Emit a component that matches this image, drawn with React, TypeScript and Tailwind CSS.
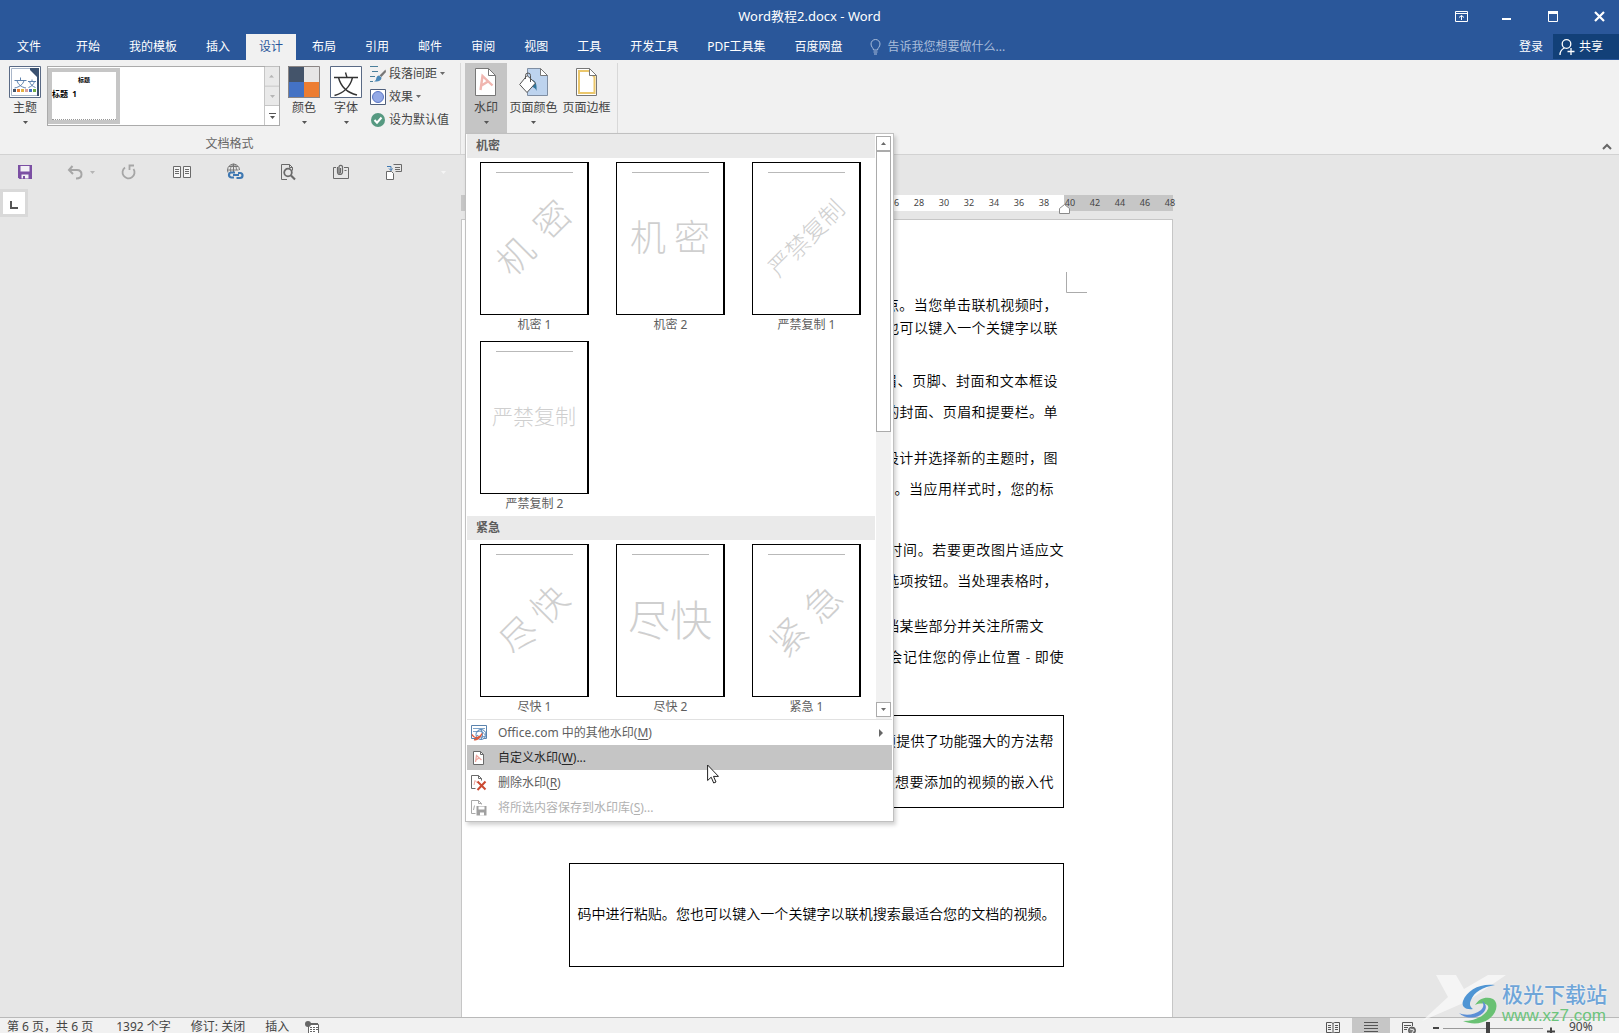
import { useState } from "react"
import type { ReactNode } from "react"

const TABS = ["开始", "我的模板", "插入", "设计", "布局", "引用", "邮件", "审阅", "视图", "工具", "开发工具", "PDF工具集", "百度网盘"]

interface Watermark {
  name: string
  text: string
  className: string
}

interface WatermarkSection {
  title: string
  items: Watermark[]
}

const SECTIONS: WatermarkSection[] = [
  {
    title: "机密",
    items: [
      { name: "机密 1", text: "机密", className: "w-[88px] -rotate-45 text-[36px]" },
      { name: "机密 2", text: "机密", className: "w-20 text-[36px]" },
      { name: "严禁复制 1", text: "严禁复制", className: "w-[96px] -rotate-45 text-[24px]" },
      { name: "严禁复制 2", text: "严禁复制", className: "w-[84px] text-[21px]" },
    ],
  },
  {
    title: "紧急",
    items: [
      { name: "尽快 1", text: "尽快", className: "w-20 -rotate-45 text-[36px]" },
      { name: "尽快 2", text: "尽快", className: "w-[84px] text-[42px]" },
      { name: "紧急 1", text: "紧急", className: "w-[84px] -rotate-45 text-[36px]" },
    ],
  },
]

interface Paragraph {
  leading: string
  lines: { text: string; className: string }[]
}

const PARAGRAPHS: Paragraph[] = [
  {
    leading: "mt-[73px] leading-[23px]",
    lines: [
      { text: "视频提供了功能强大的方法帮助您证明您的观点。当您单击联机视频时，", className: "pl-7 pr-[6px]" },
      { text: "可以在想要添加的视频的嵌入代码中进行粘贴。您也可以键入一个关键字以联", className: "pr-[6px]" },
    ],
  },
  {
    leading: "mt-[26px] leading-[31px]",
    lines: [
      { text: "为使您的文档具有专业外观，Word 提供了页眉、页脚、封面和文本框设", className: "pl-7 pr-[6px]" },
      { text: "计，这些设计可互为补充。例如，您可以添加匹配的封面、页眉和提要栏。单", className: "pr-[6px]" },
    ],
  },
  {
    leading: "mt-[15px] leading-[31px]",
    lines: [
      { text: "主题和样式也有助于文档保持协调。当您单击设计并选择新的主题时，图", className: "pl-7 pr-[6px]" },
      { text: "片、图表或 SmartArt 图形将会更改以匹配新的主题。当应用样式时，您的标", className: "pr-[10px]" },
    ],
  },
  {
    leading: "mt-[30px] leading-[31px]",
    lines: [
      { text: "使用在需要位置出现的新按钮在 Word 中保存时间。若要更改图片适应文", className: "pl-7" },
      { text: "档的方式，请单击该图片，图片旁边将会显示布局选项按钮。当处理表格时，", className: "pr-[6px]" },
    ],
  },
  {
    leading: "mt-[14px] leading-[31px]",
    lines: [
      { text: "在新的阅读视图中阅读更加容易。可以折叠文档某些部分并关注所需文", className: "pl-7 pr-5" },
      { text: "本。如果在达到结尾处之前需要停止阅读，Word 会记住您的停止位置 - 即使", className: "" },
    ],
  },
]

function Caret({ className = "text-[#6a6a6a]" }: { className?: string }) {
  return (
    <svg viewBox="0 0 5 3" className={`h-[3px] w-[5px] shrink-0 ${className}`}>
      <path d="M0 0h5L2.5 3z" fill="currentColor" />
    </svg>
  )
}

/* ---------- ribbon icons ---------- */

function ThemeIcon() {
  return (
    <svg viewBox="0 0 32 32" className="size-8">
      <path d="M.5.5h31v31H.5z" fill="#fff" stroke="#5a6a85" />
      <path d="M2.500 2.500h19l8 8v19h-27z" fill="#fff" stroke="#a9b6c9" />
      <path d="M21 2h9v9h-2l-7-7z" fill="#3b5170" />
      <path d="M29 10v20" stroke="#3b5170" strokeWidth="2" />
      <g fill="none" stroke="#5d81ad">
        <path d="M5.500 14.500h12M11.500 11.500v3M8 14.500c1 4 4 6.500 9 7.500M15 14.500c-1 4-4.500 6.500-9.500 7.500" />
        <path d="M19 15.500h8M23 13.500v2M20.500 15.500c1 3 3 5 6 6M25.500 15.500c-1 3-3 5-6 6" />
      </g>
      <path d="M4 23h3v3H4z" fill="#44546a" />
      <path d="M8 23h3v3H8z" fill="#ed7d31" />
      <path d="M12 23h3v3h-3z" fill="#e3b341" />
      <path d="M16 23h3v3h-3z" fill="#d9a0a0" />
      <path d="M20 23h3v3h-3z" fill="#4472c4" />
      <path d="M24 23h3v3h-3z" fill="#70ad47" />
    </svg>
  )
}

function ColorsIcon() {
  return (
    <svg viewBox="0 0 32 32" className="size-8">
      <path d="M0 0h16v16H0z" fill="#44546a" />
      <path d="M16 0h16v16H16z" fill="#e7e6e6" />
      <path d="M0 16h16v16H0z" fill="#4472c4" />
      <path d="M16 16h16v16H16z" fill="#ed7d31" />
      <path d="M.5.5h31v31H.5z" fill="none" stroke="#8b8685" />
    </svg>
  )
}

function FontsIcon() {
  return (
    <svg viewBox="0 0 32 32" className="size-8">
      <path d="M.5.5h31v31H.5z" fill="#fff" stroke="#5a6a85" />
      <path d="M4 11.500h24M15.500 6.500l1.500 5M8.500 11.500c2 8 8 15 18.500 17.500M22.500 11.500C20.500 20 14 27 4.500 29.500" fill="none" stroke="#333" strokeWidth="1.400" />
    </svg>
  )
}

function SpacingIcon() {
  return (
    <svg viewBox="0 0 16 16" className="size-4">
      <path d="M0 .5h8M2 5.500h6M0 10.500h5M0 15.500h3" stroke="#4b7f9b" />
      <path d="M15.500 3.500L16 6l-4.500 5-2-1.500z" fill="#777" />
      <path d="M9 9.500l2.500 2c0 3-3 4.500-7.500 4 2-1 2-2 2.500-4 .5-1.300 1.500-2 2.500-2z" fill="#4a88b8" />
    </svg>
  )
}

function EffectsIcon() {
  return (
    <svg viewBox="0 0 16 16" className="size-4">
      <path d="M.5.5h15v15H.5z" fill="#fff" stroke="#4f5f7c" />
      <circle cx="8" cy="8" r="5.500" fill="#93a9e6" stroke="#5b76c4" />
    </svg>
  )
}

function DefaultIcon() {
  return (
    <svg viewBox="0 0 16 16" className="size-4">
      <circle cx="8" cy="8" r="7" fill="#569981" />
      <path d="M4.500 8l2.500 2.700 4.500-5.200" fill="none" stroke="#fff" strokeWidth="2" />
    </svg>
  )
}

function WatermarkIcon() {
  return (
    <svg viewBox="0 0 22 30" className="h-[30px] w-[22px]">
      <path d="M.5 1.500h13l7 7v20H.5z" fill="#fff" stroke="#777" />
      <path d="M13.500 1.500v7h7" fill="none" stroke="#777" />
      <path d="M5.500 23L7.500 9l10 9.500M6.500 18.500l6.500-4" fill="none" stroke="#f0b6b0" strokeWidth="2.400" />
    </svg>
  )
}

function PageColorIcon() {
  return (
    <svg viewBox="0 0 30 30" className="h-[30px] w-[30px]">
      <path d="M8.500 1.500h13l7 7v20h-20z" fill="#bdd3ee" stroke="#7f8ea3" />
      <path d="M21.500 1.500v7h7z" fill="#fff" stroke="#777" />
      <path d="M13 13c4 0 5 5 4.500 11-1-3-3-4-4.500-4z" fill="#31759b" />
      <path d="M8 8.500l8.500 7.500L8 25.500.7 17.500z" fill="#fff" stroke="#555" />
      <path d="M6.500 12V8.500a2.500 2.500 0 0 1 5 0V15" fill="none" stroke="#555" />
    </svg>
  )
}

function BorderIcon() {
  return (
    <svg viewBox="0 0 22 30" className="h-[30px] w-[22px]">
      <path d="M.5 1.500h13l7 7v20H.5z" fill="#fff" stroke="#777" />
      <path d="M3 4h10l5.500 6v16H3z" fill="none" stroke="#ebc76c" strokeWidth="2" />
      <path d="M13.500 1.500v7h7z" fill="#fff" stroke="#777" />
    </svg>
  )
}

/* ---------- menu icons ---------- */

function OfficeIcon() {
  return (
    <svg viewBox="0 0 16 16" className="size-4" fill="none">
      <path d="M.5.500h15v13H.5z" fill="#fff" stroke="#5b83ad" />
      <path d="M2 3.500h12M2 6.500h5" stroke="#7ea4c9" />
      <circle cx="10" cy="9.500" r="5" fill="#fff" stroke="#4d7fb5" />
      <path d="M6 7c3-2 6 0 8.500 3M6 10c2 2 5 3 8 1M10 5c2 2 2 7 0 9" stroke="#4d7fb5" />
      <path d="M1 9.500c2 4 5 4 9 1M3 14.500c4 1 6-2 8-6" stroke="#dd5a3c" strokeWidth="1.500" />
    </svg>
  )
}

function CustomIcon() {
  return (
    <svg viewBox="0 0 16 16" className="size-4" fill="none">
      <path d="M2.500 1.500h7l3 3v10h-10z" fill="#fff" stroke="#6a6a6a" />
      <path d="M9.500 1.500v3h3" stroke="#6a6a6a" />
      <path d="M4.500 12L5.500 5.500l5 4.500M5 10l3-2" stroke="#eda79f" strokeWidth="1.300" />
    </svg>
  )
}

function RemoveIcon() {
  return (
    <svg viewBox="0 0 16 16" className="size-4" fill="none">
      <path d="M4.500 13.500h-4V.5h7l3 3v2" fill="#fff" stroke="#6a6a6a" />
      <path d="M7.500.5v3h3" stroke="#6a6a6a" />
      <path d="M3 10l1-4.500L6.500 8" stroke="#eda79f" />
      <path d="M6.500 6.500l8 8M14.500 6.500l-8 8.500" stroke="#cb4a32" strokeWidth="2" />
    </svg>
  )
}

function SaveToGalleryIcon() {
  return (
    <svg viewBox="0 0 16 16" className="size-4" fill="none">
      <path d="M4.500 13.500h-4V.5h7l3 3v1" stroke="#a9a9a9" />
      <path d="M7.500.5v3h3M2.500 10l1-4.500" stroke="#a9a9a9" />
      <path d="M5.500 6h10v9.500h-10z" fill="#a0a0a0" />
      <path d="M7.500 6.500h6v3h-6zM9 12.500h4v3H9z" fill="#fff" />
    </svg>
  )
}

/* ---------- quick access toolbar ---------- */

const QUICK_ACTIONS: { label: string; className: string; icon: ReactNode }[] = [
  {
    label: "保存",
    className: "ml-4",
    icon: (
      <>
        <path d="M2 2h14v14H3.500L2 14.500z" fill="#7b4fa3" />
        <path d="M4.500 3h9v5.500h-9zM5.500 11.500h7v4h-7z" fill="#f2f0f5" />
        <path d="M7 13h2v3H7z" fill="#7b4fa3" />
      </>
    ),
  },
  {
    label: "撤消",
    className: "ml-8",
    icon: <path d="M6.500 3L3 7l4 4M3.500 7H11c3 0 4.500 2 4.500 4.500S14 15.500 10 15.500" fill="none" stroke="#a6a6a6" strokeWidth="2" />,
  },
  {
    label: "重复",
    className: "ml-[25px]",
    icon: <path d="M5 4.500A6 6 0 1 0 13.500 6M14 2.500H9.500V7" fill="none" stroke="#a6a6a6" strokeWidth="1.800" />,
  },
  {
    label: "并排查看",
    className: "ml-[35px]",
    icon: (
      <g fill="none" stroke="#6a6a6a">
        <path d="M.5 3.500h7v11h-7zM10.500 3.500h7v11h-7z" fill="#f6f6f6" />
        <path d="M2 6.500h4M2 8.500h4M2 10.500h4M12 6.500h4M12 8.500h4M12 10.500h4" />
      </g>
    ),
  },
  {
    label: "超链接",
    className: "ml-[35px]",
    icon: (
      <g fill="none">
        <path d="M2 9.500A6 6 0 1 1 13.500 7M1.500 7h11M3 3.500h9M7.500 1v9M7.500 1C4 4 4 7 5 9.500M7.500 1c3 2 3 5 3 6" stroke="#777" />
        <path d="M8 14.500H5.500a2.500 2.500 0 0 1 0-5H9M12 10h2a2.500 2.500 0 0 1 0 5h-3.500M7 12h6" stroke="#3e78b2" strokeWidth="2.200" />
      </g>
    ),
  },
  {
    label: "打印预览",
    className: "ml-[35px]",
    icon: (
      <g fill="none" stroke="#6a6a6a">
        <path d="M8 16.500H2.500v-15h8l3 3v3" />
        <path d="M10.500 1.500v3h3" />
        <circle cx="9" cy="9.500" r="3.800" strokeWidth="1.800" />
        <path d="M12 12.500l4 4" strokeWidth="2.200" />
      </g>
    ),
  },
  {
    label: "附加文件",
    className: "ml-[35px]",
    icon: (
      <g fill="none" stroke="#6a6a6a">
        <path d="M4 4.500H1.500v11h15v-11H12M12.500 7.500h2" />
        <path d="M5.500 4v5a2.500 2.500 0 0 0 5 0V3.500a2 2 0 0 0-3.500 0V9c0 1.500 1.500 1.500 1.500 0V5" strokeWidth="1.200" />
      </g>
    ),
  },
  {
    label: "切换窗口",
    className: "ml-[35px]",
    icon: (
      <g fill="none" stroke="#6a6a6a">
        <path d="M8.500 1.500h8v7h-6M10 4.500h5M10 6.500h5" />
        <path d="M1.500 8.500h5l2 2v6h-7z" fill="#fff" />
        <path d="M2 3.500h4v4M4 5.500l2 2 1.500-2" stroke="#3e78b2" />
      </g>
    ),
  },
]

function QuickAccess() {
  return (
    <div className="flex h-[34px] items-center">
      {QUICK_ACTIONS.map((action) => (
        <div key={action.label} className={`flex items-center ${action.className}`}>
          <button aria-label={action.label}>
            <svg viewBox="0 0 18 18" className="size-[18px]">
              {action.icon}
            </svg>
          </button>
          {action.label === "撤消" && (
            <button aria-label="撤消列表" className="ml-[6px]">
              <Caret className="text-[#b5b5b5]" />
            </button>
          )}
        </div>
      ))}
      <button aria-label="自定义快速访问工具栏" className="ml-[38px]">
        <Caret className="text-[#f5f5f5]" />
      </button>
    </div>
  )
}

function TitleBar() {
  return (
    <div className="grid h-[34px] grid-cols-[1fr_auto_1fr] items-center">
      <span />
      <h1 className="text-[13px]">Word教程2.docx - Word</h1>
      <div className="flex justify-end gap-[6px]">
        <button aria-label="功能区显示选项" className="flex w-10 justify-center">
          <svg viewBox="0 0 13 12" className="h-3 w-[13px]" fill="none" stroke="#fff">
            <path d="M.5.500h12v10H.5zM.5 2.500h12M6.500 9V4.500M4 6.500l2.500-2 2.500 2" />
          </svg>
        </button>
        <button aria-label="最小化" className="flex w-10 justify-center">
          <svg viewBox="0 0 10 12" className="h-3 w-[10px]">
            <path d="M0 7h9v2H0z" fill="#fff" />
          </svg>
        </button>
        <button aria-label="最大化" className="flex w-10 justify-center">
          <svg viewBox="0 0 11 12" className="h-3 w-[11px]">
            <path d="M.5.500h9v10h-9zM0 2h10" fill="none" stroke="#fff" />
            <path d="M0 0h10v3H0z" fill="#fff" />
          </svg>
        </button>
        <button aria-label="关闭" className="flex w-10 justify-center">
          <svg viewBox="0 0 11 12" className="h-3 w-[11px]">
            <path d="M1 1l9 9M10 1l-9 9" stroke="#fff" strokeWidth="2.200" />
          </svg>
        </button>
      </div>
    </div>
  )
}

function TabBar() {
  const [active, setActive] = useState("设计")
  return (
    <nav className="flex h-[26px] items-stretch text-[12px]">
      <button className="mr-[9px] pl-[17px] pr-[13px]">文件</button>
      <div className="flex gap-[3px]">
        {TABS.map((tab) => (
          <button
            key={tab}
            onClick={() => setActive(tab)}
            className={`px-[13px] ${tab === active ? "bg-[#f1f1f1] text-[#2a579a]" : ""}`}
          >
            {tab}
          </button>
        ))}
      </div>
      <label className="ml-[15px] flex items-center gap-[6px] text-[#a9bddb]">
        <svg viewBox="0 0 11 16" className="h-4 w-[11px]" fill="none" stroke="currentColor">
          <path d="M3.500 11c0-2-2.500-3-2.500-6a4.500 4.500 0 0 1 9 0c0 3-2.500 4-2.500 6zM3.500 13h4M4 15h3" />
        </svg>
        <input aria-label="告诉我您想要做什么" placeholder="告诉我您想要做什么..." className="w-40 bg-transparent outline-none placeholder:text-[#a9bddb]" />
      </label>
      <button className="ml-auto px-[10px]">登录</button>
      <button className="mb-px flex items-center gap-1 bg-[#124078] pl-[6px] pr-4">
        <svg viewBox="0 0 16 18" className="h-[18px] w-4" fill="none" stroke="#fff" strokeWidth="1.300">
          <circle cx="7.500" cy="6" r="4.300" />
          <path d="M1 17c0-4 2-6 4.500-7M12 10v7M8.500 13.500h7" />
        </svg>
        共享
      </button>
    </nav>
  )
}

interface BigButtonProps {
  icon: ReactNode
  label: string
  className?: string
  caret?: boolean
}

function BigButton({ icon, label, className = "w-10", caret = true }: BigButtonProps) {
  return (
    <button className={`flex h-[70px] shrink-0 flex-col items-center pt-[3px] ${className}`}>
      <span className="flex h-8 items-center">{icon}</span>
      <span className="whitespace-nowrap leading-5">{label}</span>
      {caret && <Caret className="mt-[3px] text-[#555]" />}
    </button>
  )
}

function StyleGallery() {
  return (
    <div className="mt-[3px] flex h-[60px] w-[233px] border border-[#ababab] bg-white">
      <button className="my-px flex w-[72px] flex-col items-start border-4 border-[#c6c6c6] font-bold text-black">
        <span className="mt-1 self-center text-[6px] leading-[8px]">标题</span>
        <span className="mt-[6px] text-[8px] leading-[8px]">标题&nbsp; 1</span>
        <span className="mt-auto w-full border-b border-dotted border-[#999]" />
      </button>
      <div className="ml-auto flex w-[15px] flex-col border-l border-[#c6c6c6]">
        <button aria-label="上一行" className="flex flex-1 rotate-180 items-center justify-center border-t border-[#c6c6c6] bg-[#e9e9e9]">
          <Caret className="text-[#b5b5b5]" />
        </button>
        <button aria-label="下一行" className="flex flex-1 items-center justify-center border-b border-[#c6c6c6] bg-[#e9e9e9]">
          <Caret className="text-[#b5b5b5]" />
        </button>
        <button aria-label="其他" className="flex flex-1 flex-col items-center justify-center gap-[2px]">
          <span className="h-px w-[7px] bg-[#555]" />
          <Caret className="text-[#555]" />
        </button>
      </div>
    </div>
  )
}

function Thumbnail({ item }: { item: Watermark }) {
  return (
    <button className="flex w-[109px] flex-col items-center">
      <span className="flex h-[153px] w-full flex-col items-center border border-r-2 border-black bg-white">
        <span className="mt-[9px] h-px w-[77px] bg-[#b9b9b9]" />
        <span className="flex flex-1 items-center pb-3">
          <span className={`block whitespace-nowrap font-light leading-none text-[#cfcfcf] [text-align-last:justify] ${item.className}`}>
            {item.text}
          </span>
        </span>
      </span>
      <span className="h-[22px] leading-[20px]">{item.name}</span>
    </button>
  )
}

interface MenuItemProps {
  icon: ReactNode
  text: string
  hotkey: string
  tail?: string
  className?: string
  submenu?: boolean
  disabled?: boolean
}

function MenuItem({ icon, text, hotkey, tail = "", className = "", submenu, disabled }: MenuItemProps) {
  return (
    <button disabled={disabled} className={`flex h-[25px] w-full items-center px-1 text-left ${className}`}>
      {icon}
      <span className="ml-[11px]">
        {text}(<u className="underline-offset-2">{hotkey}</u>){tail}
      </span>
      {submenu && (
        <svg viewBox="0 0 4 8" className="ml-auto mr-[5px] h-2 w-1">
          <path d="M0 0v8l4-4z" fill="#666" />
        </svg>
      )}
    </button>
  )
}

function WatermarkMenu() {
  return (
    <div className="absolute left-0 top-full z-20 w-[429px] border border-[#c0c0c0] bg-white px-px pb-px text-[12px] text-[#5e5e5e] shadow-[2px_3px_4px_rgba(0,0,0,0.18)]">
      <div className="flex">
        <div className="w-[408px]">
          {SECTIONS.map((section) => (
            <section key={section.title}>
              <h2 className="h-6 bg-[#eaeaea] px-[9px] font-bold leading-[23px]">{section.title}</h2>
              <div className="grid grid-cols-[repeat(3,109px)] gap-x-[27px] gap-y-1 pl-[13px] pt-1">
                {section.items.map((item) => (
                  <Thumbnail key={item.name} item={item} />
                ))}
              </div>
            </section>
          ))}
        </div>
        <div className="ml-px mt-[2px] flex w-[15px] flex-col bg-[#f1f1f1]">
          <button aria-label="向上滚动" className="flex h-[15px] rotate-180 items-center justify-center border border-[#ababab] bg-white">
            <Caret />
          </button>
          <div className="h-[281px] border border-[#ababab] bg-white" />
          <button aria-label="向下滚动" className="mb-[2px] mt-auto flex h-[15px] items-center justify-center border border-[#ababab] bg-white">
            <Caret />
          </button>
        </div>
      </div>
      <div className="border-t border-[#e1e1e1]">
        <MenuItem icon={<OfficeIcon />} text="Office.com 中的其他水印" hotkey="M" submenu />
        <MenuItem icon={<CustomIcon />} text="自定义水印" hotkey="W" tail="..." className="bg-[#c5c5c5] text-[#262626]" />
        <MenuItem icon={<RemoveIcon />} text="删除水印" hotkey="R" />
        <MenuItem icon={<SaveToGalleryIcon />} text="将所选内容保存到水印库" hotkey="S" tail="..." className="text-[#b1b1b1]" disabled />
      </div>
      {/* Mouse pointer */}
      <svg viewBox="0 0 12 20" className="absolute bottom-[37px] left-[241px] h-5 w-3">
        <path d="M.6 1v15.500l3.600-3.300 2.500 5.800 2.300-1-2.500-5.600h5z" fill="#fff" stroke="#222" />
      </svg>
    </div>
  )
}

function Ribbon() {
  return (
    <div className="flex h-[95px] border-b border-[#d2d2d2] bg-[#f1f1f1] pt-[3px] text-[12px] text-[#444]">
      <div className="flex w-[461px] flex-col border-r border-[#d8d8d8] pl-[5px]">
        <div className="flex gap-[2px]">
          <BigButton icon={<ThemeIcon />} label="主题" />
          <StyleGallery />
          <BigButton icon={<ColorsIcon />} label="颜色" className="ml-[2px] w-10" />
          <BigButton icon={<FontsIcon />} label="字体" />
          <div className="flex flex-col gap-[2px] pl-[2px]">
            <button className="flex h-[21px] items-center gap-[3px]">
              <SpacingIcon />
              段落间距
              <Caret />
            </button>
            <button className="flex h-[21px] items-center gap-[3px]">
              <EffectsIcon />
              效果
              <Caret />
            </button>
            <button className="flex h-[21px] items-center gap-[3px]">
              <DefaultIcon />
              设为默认值
            </button>
          </div>
        </div>
        <div className="mt-[2px] pr-[6px] text-center text-[#666]">文档格式</div>
      </div>
      <div className="flex w-[157px] border-r border-[#d8d8d8] pl-1">
        <div className="relative h-[70px]">
          <BigButton icon={<WatermarkIcon />} label="水印" className="w-[42px] bg-[#c5c5c5]" />
          <WatermarkMenu />
        </div>
        <BigButton icon={<PageColorIcon />} label="页面颜色" className="w-[53px]" />
        <BigButton icon={<BorderIcon />} label="页面边框" className="w-[53px]" caret={false} />
      </div>
      <button aria-label="折叠功能区" className="mb-1 ml-auto mr-[7px] self-end">
        <svg viewBox="0 0 10 7" className="h-[7px] w-[10px]">
          <path d="M1 6l4-4 4 4" fill="none" stroke="#666" strokeWidth="2" />
        </svg>
      </button>
    </div>
  )
}

function Ruler() {
  const inside = Array.from({ length: 19 }, (_, i) => (i + 1) * 2)
  const outside = [40, 42, 44, 46, 48]
  return (
    <div className="flex h-4 text-[9px] leading-4 text-[#444]">
      <div className="w-[102px] shrink-0 bg-[#c6c6c6]" />
      <div className="flex flex-1 justify-end bg-white pr-[7px]">
        {inside.map((n) => (
          <span key={n} className="w-[25px] shrink-0 text-center">
            {n}
          </span>
        ))}
      </div>
      <div className="relative flex w-[109px] shrink-0 bg-[#c6c6c6]">
        <div className="-ml-[6px] flex">
          {outside.map((n) => (
            <span key={n} className="w-[25px] shrink-0 text-center">
              {n}
            </span>
          ))}
        </div>
        <svg viewBox="0 0 11 10" className="absolute -left-[5px] top-[9px] h-[10px] w-[11px]">
          <path d="M.5 9.500v-5l5-4 5 4v5z" fill="#fff" stroke="#8a8a8a" />
        </svg>
      </div>
    </div>
  )
}

function Page() {
  return (
    <article className="relative mt-2 flex-1 border-x border-t border-[#c6c6c6] bg-white pl-[107px] pr-[108px] text-[14px] font-[350] text-black">
      <svg viewBox="0 0 21 21" className="absolute right-[85px] top-[52px] size-[21px]">
        <path d="M.5 0v20.500H21" fill="none" stroke="#ababab" />
      </svg>
      {PARAGRAPHS.map((paragraph) => (
        <div key={paragraph.leading + paragraph.lines[0].text} className={paragraph.leading}>
          {paragraph.lines.map((line) => (
            <p key={line.text} className={`whitespace-nowrap [text-align-last:justify] ${line.className}`}>
              {line.text}
            </p>
          ))}
        </div>
      ))}
      <div className="mt-[43px] h-[93px] border border-black pl-2 pr-[9px] pt-1 leading-[41px]">
        <p className="pl-[290px] [text-align-last:justify]">视频提供了功能强大的方法帮</p>
        <p className="[text-align-last:justify]">助您证明您的观点。当您单击联机视频时，可以在想要添加的视频的嵌入代</p>
      </div>
      <div className="mt-[55px] flex h-[104px] items-center border border-black pb-[3px] pl-2 pr-[7px]">
        <p className="w-full whitespace-nowrap [text-align-last:justify]">码中进行粘贴。您也可以键入一个关键字以联机搜索最适合您的文档的视频。</p>
      </div>
    </article>
  )
}

function SiteLogo() {
  return (
    <div className="absolute bottom-2 right-[9px] z-30 flex items-end">
      <svg viewBox="0 0 100 50" className="-mr-[60px] h-[50px] w-[100px]">
        <path d="M18 0h20l8 14L70 0h18L50 26 4 46l26-24z" fill="#fff" opacity=".6" />
      </svg>
      <svg viewBox="0 0 42 42" className="mr-[2px] h-[42px] w-[42px]">
        <path d="M37 2C22 0 9 7 5 18c-2 6 3 9 10 8-3-2-4-5-2-9C16 9 25 4 37 2z" fill="#4f95d4" />
        <path d="M17 22c4-7 12-9 18-6 6 4 4 14-4 20-7 5-17 6-26 2 12 0 22-5 25-12 2-5-6-7-13-4z" fill="#69c173" />
        <path d="M1 30c6 3 16 2 22-3 3-3 3-6 1-9 5 3 5 8 1 12-6 6-18 6-24 0z" fill="#5c8fd6" />
      </svg>
      <div className="w-[108px]">
        <div className="whitespace-nowrap text-[21px] font-medium leading-[26px] text-[#6fa5d8] [text-shadow:0_0_2px_#fff]">极光下载站</div>
        <div className="font-['Liberation_Sans',sans-serif] text-[17px] leading-[18px] text-[#6cc47c]">www.xz7.com</div>
      </div>
    </div>
  )
}

function StatusBar() {
  const [zoom, setZoom] = useState(45)
  return (
    <footer className="flex h-4 items-start overflow-hidden border-t border-[#b9b9b9] bg-[#f1f1f1] pl-[7px] text-[12px] leading-[18px] text-[#444]">
      <span>第 6 页，共 6 页</span>
      <span className="ml-[23px]">1392 个字</span>
      <span className="ml-5">修订: 关闭</span>
      <span className="ml-5">插入</span>
      <button aria-label="宏录制" className="ml-4 mt-[3px]">
        <svg viewBox="0 0 14 13" className="h-[13px] w-[14px]">
          <path d="M3.500 3.500h10v9h-10z" fill="#fff" stroke="#666" />
          <path d="M5 2h8v2H5zM5 6h2v1H5zM8 6h2v1H8zM11 6h2v1h-2zM5 8h2v1H5zM8 8h2v1H8zM11 8h2v1h-2zM5 10h2v1H5zM8 10h2v1H8z" fill="#666" />
          <circle cx="3" cy="3" r="3" fill="#666" />
        </svg>
      </button>
      <div className="ml-auto flex">
        <button aria-label="阅读视图" className="flex h-[22px] w-[38px] justify-center pt-[3px]">
          <svg viewBox="0 0 14 13" className="h-[13px] w-[14px]" fill="none" stroke="#555">
            <path d="M.5 1.500h5l1.500 1 1.500-1h5v10h-5l-1.500 1-1.500-1h-5zM7 2.500v10M2 4.500h3M2 6.500h3M2 8.500h3M9 4.500h3M9 6.500h3M9 8.500h3" />
          </svg>
        </button>
        <button aria-label="页面视图" className="flex h-[22px] w-[38px] justify-center bg-[#c6c6c6] pt-[3px]">
          <svg viewBox="0 0 14 13" className="h-[13px] w-[14px]" fill="none" stroke="#555">
            <path d="M0 1.500h14M0 4.500h14M0 7.500h14M0 10.500h14" />
          </svg>
        </button>
        <button aria-label="Web 版式视图" className="flex h-[22px] w-[38px] justify-center pt-[3px]">
          <svg viewBox="0 0 14 13" className="h-[13px] w-[14px]" fill="none" stroke="#555">
            <path d="M6 12.500H.5v-11h10V5M2 4.500h7M2 6.500h4M2 8.500h3" />
            <circle cx="10" cy="9.500" r="3.500" fill="#777" />
            <path d="M8 8l4 1-2 3" stroke="#eee" />
          </svg>
        </button>
        <button aria-label="缩小" className="ml-[5px] mt-[9px] h-[2px] w-[6px] bg-[#444]" />
        <input
          type="range"
          aria-label="显示比例"
          value={zoom}
          onChange={(e) => setZoom(Number(e.target.value))}
          className="ml-1 mt-[4px] h-3 w-[100px] appearance-none bg-[linear-gradient(#999,#999)] bg-[length:100%_1px] bg-center bg-no-repeat [&::-webkit-slider-thumb]:h-3 [&::-webkit-slider-thumb]:w-1 [&::-webkit-slider-thumb]:appearance-none [&::-webkit-slider-thumb]:bg-[#444]"
        />
        <button aria-label="放大" className="ml-1 mt-[5px]">
          <svg viewBox="0 0 8 9" className="h-[9px] w-2">
            <path d="M0 4.500h8M4 .5v8" stroke="#444" strokeWidth="2" />
          </svg>
        </button>
        <span className="ml-[14px] w-[50px]">90%</span>
      </div>
    </footer>
  )
}

export default function App() {
  return (
    <div className="relative flex h-screen flex-col overflow-hidden bg-[#e6e6e6] font-['Noto_Sans','Noto_Sans_CJK_SC',sans-serif]">
      <header className="bg-[#2a579a] text-white">
        <TitleBar />
        <TabBar />
      </header>
      <Ribbon />
      <QuickAccess />
      <main className="flex flex-1 overflow-hidden">
        <div className="w-7 shrink-0">
          <button aria-label="制表符" className="flex h-7 w-full items-center justify-center border-[3px] border-[#d9d9d9] bg-white pt-1">
            <svg viewBox="0 0 8 8" className="size-2">
              <path d="M1 0v7h7" fill="none" stroke="#555" strokeWidth="2" />
            </svg>
          </button>
        </div>
        <div className="flex flex-1 justify-center pr-[14px]">
          <div className="flex w-[712px] flex-col pt-[6px]">
            <Ruler />
            <Page />
          </div>
        </div>
      </main>
      <StatusBar />
      <SiteLogo />
    </div>
  )
}
